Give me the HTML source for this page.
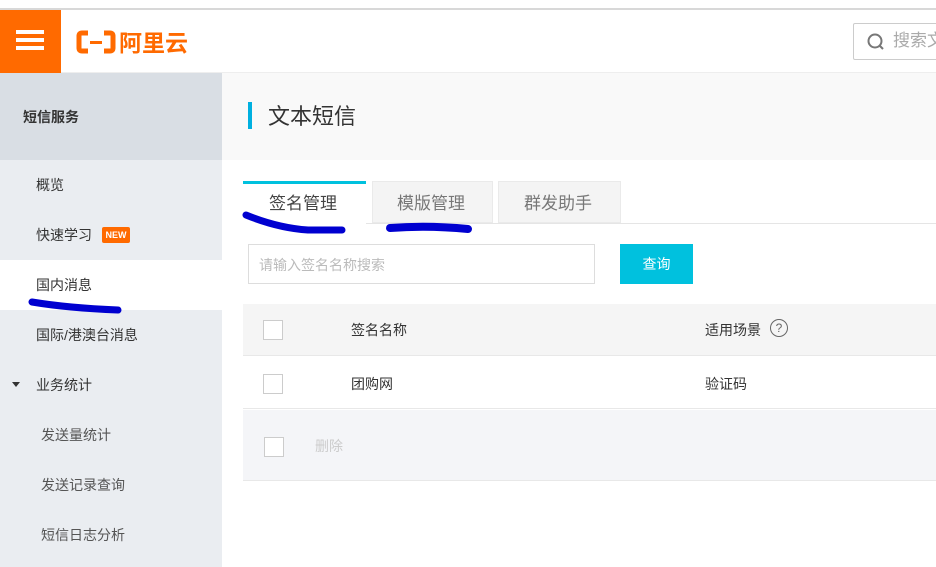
<!DOCTYPE html>
<html><head><meta charset="utf-8"><style>
*{margin:0;padding:0;box-sizing:border-box}
body{width:936px;height:567px;overflow:hidden;background:#fff;font-family:"Liberation Sans","Noto Sans CJK SC",sans-serif;position:relative;color:#333}
.a{position:absolute}
.t{position:absolute;font-size:14px;white-space:nowrap;line-height:20px;margin-top:1px}
</style></head><body>
<div class="a" style="left:0;top:0;width:936px;height:8px;background:#fff"></div>
<div class="a" style="left:0;top:8px;width:936px;height:2px;background:#d8d8d8"></div>
<div class="a" style="left:0;top:10px;width:936px;height:63px;background:#fff;border-bottom:1px solid #eee"></div>
<div class="a" style="left:0;top:10px;width:61px;height:63px;background:#ff6a00"></div>
<div class="a" style="left:16px;top:30px;width:28px;height:4px;background:#fff"></div>
<div class="a" style="left:16px;top:38px;width:28px;height:4px;background:#fff"></div>
<div class="a" style="left:16px;top:46px;width:28px;height:4px;background:#fff"></div>
<svg class="a" style="left:76px;top:30px" width="40" height="24" viewBox="0 0 40 24"><path d="M12 3H6Q3 3 3 6V18Q3 21 6 21H12M28 3H34Q37 3 37 6V18Q37 21 34 21H28" fill="none" stroke="#ff6a00" stroke-width="5"/><rect x="14" y="11" width="12" height="3" fill="#ff6a00"/></svg>
<div class="t" style="left:119px;top:28px;font-size:23px;line-height:28px;color:#ff6a00;font-weight:bold">阿里云</div>
<div class="a" style="left:853px;top:23px;width:90px;height:37px;border:1px solid #ccc;border-radius:2px;background:#fff"></div>
<svg class="a" style="left:866px;top:32px" width="20" height="20"><circle cx="9" cy="9" r="6.5" fill="none" stroke="#777" stroke-width="2"/><path d="M13.5 13.5L17 17" stroke="#777" stroke-width="2"/></svg>
<div class="t" style="left:893px;top:30px;font-size:17px;color:#aaa">搜索文</div>

<div class="a" style="left:0;top:73px;width:222px;height:494px;background:#eaedf1"></div>
<div class="a" style="left:0;top:73px;width:222px;height:87px;background:#d9dee4"></div>
<div class="t" style="left:23px;top:106px;font-weight:bold;color:#333">短信服务</div>
<div class="t" style="left:36px;top:174px;color:#333">概览</div>
<div class="t" style="left:36px;top:224px;color:#333">快速学习</div>
<div class="a" style="left:102px;top:227px;width:28px;height:16px;background:#ff6a00;border-radius:2px;color:#fff;font-size:9px;line-height:16px;text-align:center;font-weight:bold">NEW</div>
<div class="a" style="left:0;top:260px;width:222px;height:50px;background:#fff"></div>
<div class="t" style="left:36px;top:274px;color:#333">国内消息</div>
<svg class="a" style="left:28px;top:296px" width="100" height="24"><path d="M4 6Q40 12 90 14" stroke="#0000d0" stroke-width="7" stroke-linecap="round" fill="none"/></svg>
<div class="t" style="left:36px;top:324px;color:#333">国际/港澳台消息</div>
<div class="a" style="left:12px;top:382px;width:0;height:0;border-left:4px solid transparent;border-right:4px solid transparent;border-top:5px solid #333"></div>
<div class="t" style="left:36px;top:374px;color:#333">业务统计</div>
<div class="t" style="left:41px;top:424px;color:#555">发送量统计</div>
<div class="t" style="left:41px;top:474px;color:#555">发送记录查询</div>
<div class="t" style="left:41px;top:524px;color:#555">短信日志分析</div>

<div class="a" style="left:222px;top:73px;width:714px;height:87px;background:#f9f9f9"></div>
<div class="a" style="left:248px;top:102px;width:4px;height:27px;background:#00b0e0"></div>
<div class="t" style="left:268px;top:101px;font-size:22px;line-height:30px;color:#333">文本短信</div>

<div class="a" style="left:243px;top:223px;width:693px;height:1px;background:#e5e5e5"></div>
<div class="a" style="left:243px;top:181px;width:123px;height:43px;background:#fff;border-top:3px solid #00c1de"></div>
<div class="t" style="left:269px;top:192px;font-size:17px;line-height:22px;color:#444">签名管理</div>
<div class="a" style="left:372px;top:181px;width:121px;height:42px;background:#f4f4f4;border:1px solid #eaeaea"></div>
<div class="t" style="left:397px;top:192px;font-size:17px;line-height:22px;color:#777">模版管理</div>
<div class="a" style="left:498px;top:181px;width:123px;height:42px;background:#f4f4f4;border:1px solid #eaeaea"></div>
<div class="t" style="left:524px;top:192px;font-size:17px;line-height:22px;color:#777">群发助手</div>
<svg class="a" style="left:238px;top:210px" width="250" height="30"><path d="M8 5Q40 18 70 20L104 20" stroke="#0000d0" stroke-width="7" stroke-linecap="round" fill="none"/><path d="M152 18Q190 15 230 19" stroke="#0000d0" stroke-width="8" stroke-linecap="round" fill="none"/></svg>

<div class="a" style="left:248px;top:244px;width:347px;height:40px;border:1px solid #ddd;background:#fff"></div>
<div class="t" style="left:259px;top:254px;color:#bbb">请输入签名名称搜索</div>
<div class="a" style="left:620px;top:244px;width:73px;height:40px;background:#00c1de;color:#fff;font-size:14px;line-height:40px;text-align:center">查询</div>

<div class="a" style="left:243px;top:304px;width:693px;height:52px;background:#f5f5f5;border-bottom:1px solid #e8e8e8"></div>
<div class="a" style="left:263px;top:320px;width:20px;height:20px;border:1px solid #ccc;background:#fff"></div>
<div class="t" style="left:351px;top:319px;color:#333">签名名称</div>
<div class="t" style="left:705px;top:319px;color:#333">适用场景</div>
<div class="a" style="left:770px;top:319px;width:18px;height:18px;border:1px solid #666;border-radius:50%;font-size:12px;line-height:16px;text-align:center;color:#666">?</div>
<div class="a" style="left:243px;top:357px;width:693px;height:52px;background:#fff;border-bottom:1px solid #e8e8e8"></div>
<div class="a" style="left:263px;top:374px;width:20px;height:20px;border:1px solid #ccc;background:#fff"></div>
<div class="t" style="left:351px;top:373px;color:#333">团购网</div>
<div class="t" style="left:705px;top:373px;color:#333">验证码</div>
<div class="a" style="left:243px;top:410px;width:693px;height:71px;background:#f4f5f8;border-bottom:1px solid #e8e8e8"></div>
<div class="a" style="left:264px;top:437px;width:20px;height:20px;border:1px solid #ccc;background:#fff"></div>
<div class="t" style="left:315px;top:435px;color:#ccc">删除</div>
</body></html>
